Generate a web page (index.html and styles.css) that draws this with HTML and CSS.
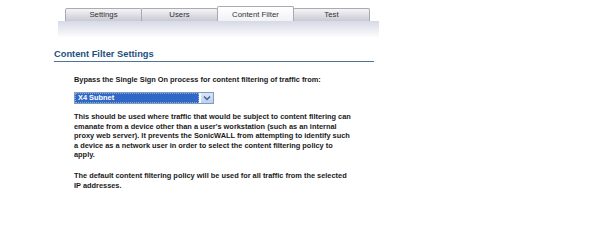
FILE: index.html
```html
<!DOCTYPE html>
<html>
<head>
<meta charset="utf-8">
<link rel="stylesheet" href="styles.css">
</head>
<body>
<div class="page">
  <div class="tabs">
    <div class="tab">Settings</div>
    <div class="tab">Users</div>
    <div class="tab active">Content Filter</div>
    <div class="tab">Test</div>
  </div>
  <div class="bar"></div>
  <h2 class="heading">Content Filter Settings</h2>
  <div class="content">
    <p class="label">Bypass the Single Sign On process for content filtering of traffic from:</p>
    <div class="select">
      <div class="select-value"><span class="focus">X4 Subnet</span></div>
      <div class="select-btn">
        <svg width="8" height="6" viewBox="0 0 8 6"><path d="M1 1.5 L4 4.5 L7 1.5" fill="none" stroke="#4d6185" stroke-width="1.5"/></svg>
      </div>
    </div>
    <p class="text">This should be used where traffic that would be subject to content filtering can emanate from a device other than a user's workstation (such as an internal proxy web server). It prevents the SonicWALL from attempting to identify such a device as a network user in order to select the content filtering policy to apply.</p>
    <p class="text">The default content filtering policy will be used for all traffic from the selected IP addresses.</p>
  </div>
</div>
</body>
</html>
```

FILE: styles.css
```css
* { box-sizing: border-box; }
html, body { margin: 0; padding: 0; background: #fff; }
body { font-family: "Liberation Sans", Arial, sans-serif; width: 609px; height: 205px; overflow: hidden; }
.page { padding-top: 6px; }
.tabs { display: flex; align-items: flex-end; margin-left: 65px; height: 15px; }
.tab {
  width: 77px; height: 13px; margin-right: -1px;
  border: 1px solid #a9aab3; border-bottom: none;
  border-radius: 2px 2px 0 0;
  background: linear-gradient(#f5f5f7, #c8c9d3);
  font-size: 7.8px; color: #333; text-align: center; line-height: 12px;
}
.tab.active { height: 15px; background: linear-gradient(#ffffff, #f1f2f6); line-height: 15px; }
.bar {
  margin-left: 58px; width: 321px; height: 17px;
  background: linear-gradient(#d6d9e6, #ffffff);
}
.heading {
  margin: 12px 0 0 54px; width: 320px;
  font-size: 9.3px; font-weight: bold; color: #1d4f7e;
  border-bottom: 1px solid #4f7399; line-height: 9px; padding-bottom: 2px;
}
.content { margin-left: 74px; width: 280px; }
.content p { margin: 0; font-size: 7.4px; font-weight: bold; color: #1a1a1a; }
.label { margin-top: 13px !important; line-height: 9px; }
.select {
  display: flex; width: 140px; height: 12px; margin-top: 8px;
  border: 1px solid #7f9db9; background: #fff;
}
.select-value { flex: 1; padding: 0 1px 0 0; }
.focus {
  display: block; height: 100%; background: #3167c6; color: #fff;
  font-size: 7.4px; font-weight: bold; line-height: 8px; padding-left: 2px;
  border: 1px dotted #8aa8e0;
}
.select-btn {
  width: 13px; display: flex; align-items: center; justify-content: center;
  background: linear-gradient(#d8e4fb, #bcd0f5); border-left: 1px solid #fff;
}
.text { margin-top: 8px !important; line-height: 9.6px; }
.text + .text { margin-top: 11px !important; }
```
